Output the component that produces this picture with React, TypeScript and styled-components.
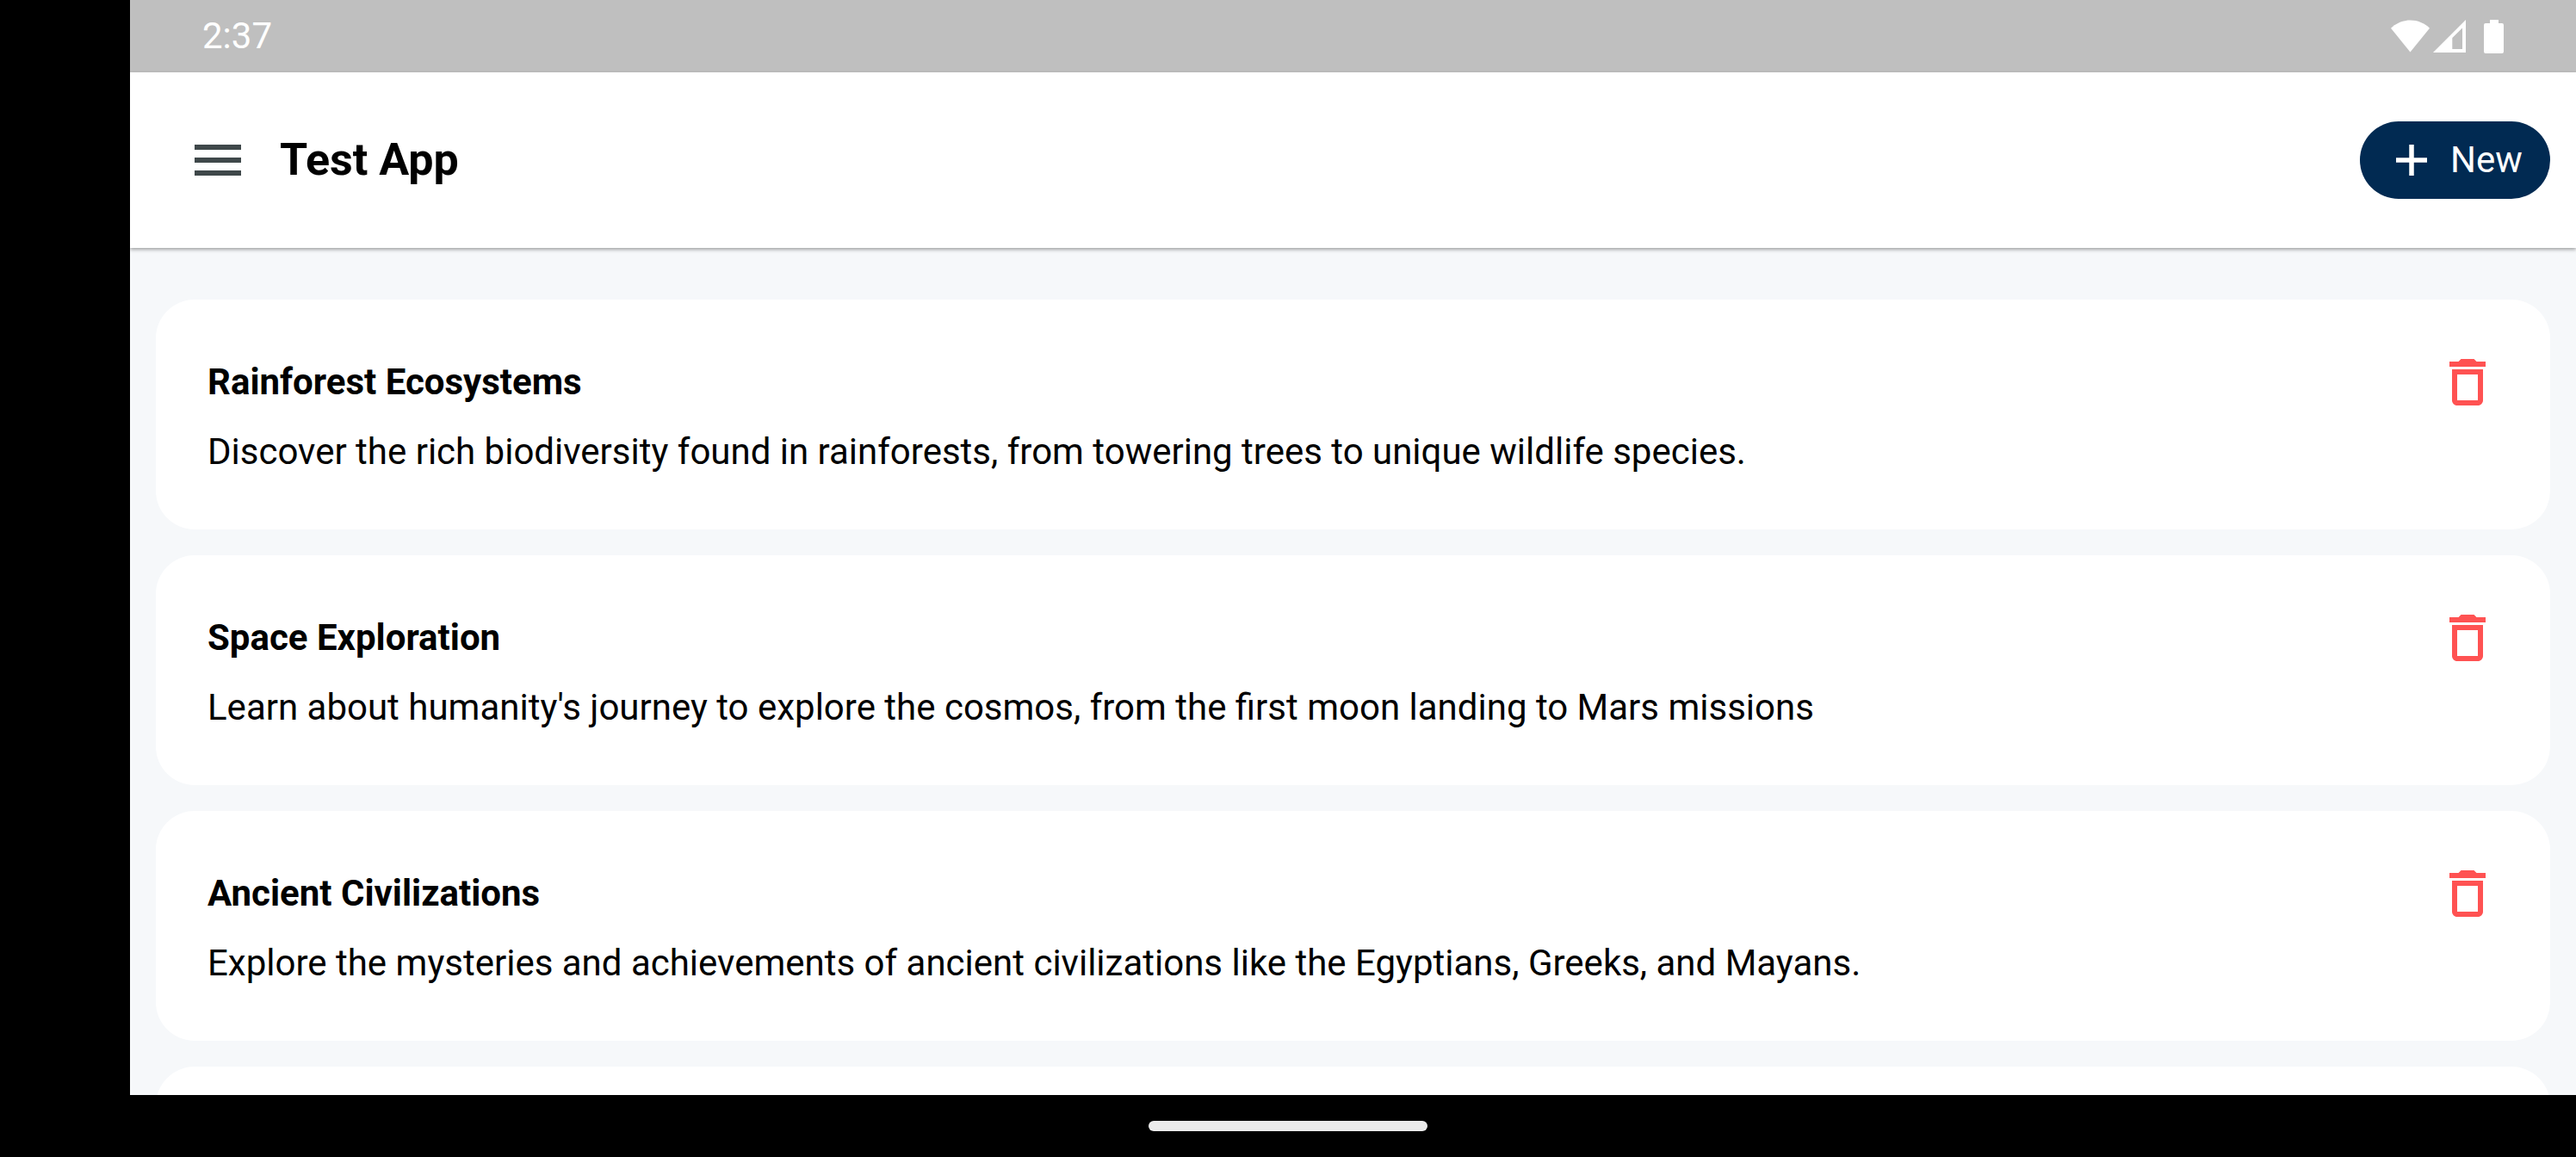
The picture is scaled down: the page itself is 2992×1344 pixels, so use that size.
import React from "react";
import styled, { createGlobalStyle } from "styled-components";

const GlobalStyle = createGlobalStyle`
  *, *::before, *::after {
    box-sizing: border-box;
  }
  body {
    margin: 0;
    background: #000000;
    color: #000000;
    font-family: Roboto, "Liberation Sans", sans-serif;
    font-size: 42px;
    line-height: 60px;
  }
  h1, h2, p, ul {
    margin: 0;
    padding: 0;
  }
`;

const Device = styled.div`
  display: flex;
  flex-direction: column;
  height: 100vh;
  overflow: hidden;
`;

const Screen = styled.div`
  flex: 1;
  min-height: 0;
  display: flex;
  flex-direction: column;
  margin-left: 151px;
  overflow: hidden;
  background: #f6f8fa;
`;

const StatusBar = styled.div`
  flex: none;
  display: flex;
  align-items: center;
  justify-content: space-between;
  height: 84px;
  padding: 0 84px;
  background: #bfbfbf;
  color: #ffffff;
`;

const StatusIcons = styled.div`
  display: flex;
  align-items: center;
  gap: 4px;
`;

const BatteryIcon = styled.svg`
  margin-left: 17px;
`;

const AppBar = styled.header`
  flex: none;
  display: flex;
  align-items: center;
  height: 204px;
  padding: 0 30px 0 66px;
  background: #ffffff;
  box-shadow: 0 2px 4px rgba(0, 0, 0, 0.35);
`;

const IconButton = styled.button`
  flex: none;
  display: flex;
  padding: 0;
  border: 0;
  background: none;
  color: ${(props) => props.color};
  cursor: pointer;
`;

const AppTitle = styled.h1`
  flex: 1;
  margin-left: 36px;
  font-size: 52px;
  font-weight: 700;
`;

const NewButton = styled.button`
  display: flex;
  align-items: center;
  gap: 15px;
  height: 90px;
  min-width: 221px;
  padding: 0 30px;
  border: 0;
  border-radius: 45px;
  background: #012a52;
  color: #ffffff;
  font: inherit;
  cursor: pointer;
`;

const TopicList = styled.ul`
  flex: 1;
  min-height: 0;
  display: flex;
  flex-direction: column;
  gap: 30px;
  padding: 60px 30px 0;
  overflow: hidden;
  list-style: none;
`;

const Card = styled.li`
  flex: none;
  display: flex;
  flex-direction: column;
  gap: 15px;
  min-height: 267px;
  padding: 60px;
  border-radius: 45px;
  background: #ffffff;
`;

const CardHeader = styled.div`
  display: flex;
  align-items: center;
  justify-content: space-between;
`;

const CardTitle = styled.h2`
  font-size: 42px;
  font-weight: 700;
`;

const NavigationBar = styled.div`
  flex: none;
  display: flex;
  align-items: center;
  justify-content: center;
  height: 72px;
`;

const HomeHandle = styled.div`
  width: 324px;
  height: 12px;
  border-radius: 6px;
  background: #ebebeb;
`;

const topics = [
  {
    title: "Rainforest Ecosystems",
    description:
      "Discover the rich biodiversity found in rainforests, from towering trees to unique wildlife species.",
  },
  {
    title: "Space Exploration",
    description:
      "Learn about humanity's journey to explore the cosmos, from the first moon landing to Mars missions",
  },
  {
    title: "Ancient Civilizations",
    description:
      "Explore the mysteries and achievements of ancient civilizations like the Egyptians, Greeks, and Mayans.",
  },
];

function Glyph({ size, d }: { size: number; d: string }) {
  return (
    <svg width={size} height={size} viewBox="0 0 24 24" fill="currentColor" aria-hidden="true">
      <path d={d} />
    </svg>
  );
}

const MENU = "M3 18h18v-2H3v2zm0-5h18v-2H3v2zm0-7v2h18V6H3z";
const ADD = "M19.2 13.1h-6.1v6.1h-2.2v-6.1H4.8v-2.2h6.1V4.8h2.2v6.1h6.1z";
const DELETE =
  "M6 19c0 1.1.9 2 2 2h8c1.1 0 2-.9 2-2V7H6v12zM8 9h8v10H8V9zm7.5-5l-1-1h-5l-1 1H5v2h14V4h-3.5z";

function Topic({ title, description }: { title: string; description: string }) {
  return (
    <Card>
      <CardHeader>
        <CardTitle>{title}</CardTitle>
        <IconButton type="button" color="#ff5252" aria-label="Delete">
          <Glyph size={72} d={DELETE} />
        </IconButton>
      </CardHeader>
      <p>{description}</p>
    </Card>
  );
}

export default function App() {
  return (
    <Device>
      <GlobalStyle />
      <Screen>
        <StatusBar>
          <time>2:37</time>
          <StatusIcons>
            <svg width="45" height="38" viewBox="0 0 45 38" fill="#ffffff" aria-hidden="true">
              <path d="M0 9.7C6 3.8 14 .5 22.500 .5S39 3.8 45 9.7L22.5 37.5z" />
            </svg>
            <svg width="38" height="38" viewBox="0 0 38 38" fill="#ffffff" aria-hidden="true">
              <path fillRule="evenodd" d="M38 0v38H0zM34 9.4L22.3 21v13H34z" />
            </svg>
            <BatteryIcon width="23" height="39" viewBox="0 0 23 39" fill="#ffffff" aria-hidden="true">
              <path d="M7 0h10v4h4a2 2 0 0 1 2 2v31a2 2 0 0 1-2 2H2a2 2 0 0 1-2-2V6a2 2 0 0 1 2-2h5z" />
            </BatteryIcon>
          </StatusIcons>
        </StatusBar>
        <AppBar>
          <IconButton type="button" color="#3f484a" aria-label="Menu">
            <Glyph size={72} d={MENU} />
          </IconButton>
          <AppTitle>Test App</AppTitle>
          <NewButton type="button">
            <Glyph size={60} d={ADD} />
            New
          </NewButton>
        </AppBar>
        <TopicList>
          {topics.map((topic) => (
            <Topic key={topic.title} {...topic} />
          ))}
          <Card aria-hidden="true" />
        </TopicList>
      </Screen>
      <NavigationBar>
        <HomeHandle />
      </NavigationBar>
    </Device>
  );
}
